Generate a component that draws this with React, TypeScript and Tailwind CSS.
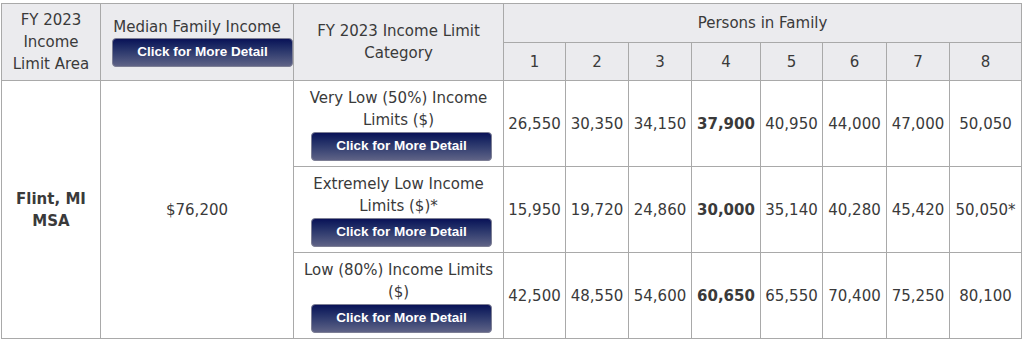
const rows = [
  {
    label: ['Very Low (50%) Income', 'Limits ($)'],
    values: ['26,550', '30,350', '34,150', '37,900', '40,950', '44,000', '47,000', '50,050'],
  },
  {
    label: ['Extremely Low Income', 'Limits ($)*'],
    values: ['15,950', '19,720', '24,860', '30,000', '35,140', '40,280', '45,420', '50,050*'],
  },
  {
    label: ['Low (80%) Income Limits', '($)'],
    values: ['42,500', '48,550', '54,600', '60,650', '65,550', '70,400', '75,250', '80,100'],
  },
]

function DetailButton({ className = '' }: { className?: string }) {
  return (
    <button
      className={
        'h-[29px] w-[181px] rounded-[4px] border border-[#7d7f95] bg-gradient-to-b from-[#0a1157] to-[#5f6386] text-[13.5px] font-bold text-white ' +
        className
      }
      style={{ fontFamily: '"Liberation Sans", Arial, sans-serif' }}
    >
      Click for More Detail
    </button>
  )
}

const cell = 'border border-[#a9a9a9] text-center align-middle'
const head = cell + ' bg-[#ebebee] font-normal'

export default function App() {
  return (
    <div className="min-h-screen bg-white pl-[1px] pt-[3px]">
      <table
        className="w-[1021px] table-fixed border-collapse text-[15px] leading-[22px] text-[#3a3a3a]"
        style={{ fontFamily: '"DejaVu Sans", Verdana, sans-serif' }}
      >
        <colgroup>
          <col className="w-[99px]" />
          <col className="w-[193px]" />
          <col className="w-[210px]" />
          <col className="w-[62px]" />
          <col className="w-[63px]" />
          <col className="w-[63px]" />
          <col className="w-[69px]" />
          <col className="w-[62px]" />
          <col className="w-[64px]" />
          <col className="w-[63px]" />
          <col className="w-[72px]" />
        </colgroup>
        <thead>
          <tr className="h-[39px]">
            <th rowSpan={2} className={head + ' px-1'}>
              FY 2023 Income Limit Area
            </th>
            <th rowSpan={2} className={head + ' px-0 pb-[2px]'}>
              <div>Median Family Income</div>
              <div className="flex pl-[11px]">
                <DetailButton className="w-[180px]" />
              </div>
            </th>
            <th rowSpan={2} className={head + ' px-1'}>
              FY 2023 Income Limit
              <br />
              Category
            </th>
            <th colSpan={8} className={head}>
              Persons in Family
            </th>
          </tr>
          <tr className="h-[38px]">
            {[1, 2, 3, 4, 5, 6, 7, 8].map((n) => (
              <th key={n} className={head}>
                {n}
              </th>
            ))}
          </tr>
        </thead>
        <tbody>
          {rows.map((r, i) => (
            <tr key={i} className="h-[86px]">
              {i === 0 && (
                <>
                  <td rowSpan={3} className={cell + ' font-bold'}>
                    Flint, MI
                    <br />
                    MSA
                  </td>
                  <td rowSpan={3} className={cell}>
                    $76,200
                  </td>
                </>
              )}
              <td className={cell + ' py-[5px]'}>
                <div>{r.label[0]}</div>
                <div>{r.label[1]}</div>
                <div className="flex justify-center pl-[6px] pt-[1px]">
                  <DetailButton />
                </div>
              </td>
              {r.values.map((v, j) => (
                <td key={j} className={cell + ' whitespace-nowrap px-0' + (j === 3 ? ' font-bold' : '')}>
                  {v}
                </td>
              ))}
            </tr>
          ))}
        </tbody>
      </table>
    </div>
  )
}
